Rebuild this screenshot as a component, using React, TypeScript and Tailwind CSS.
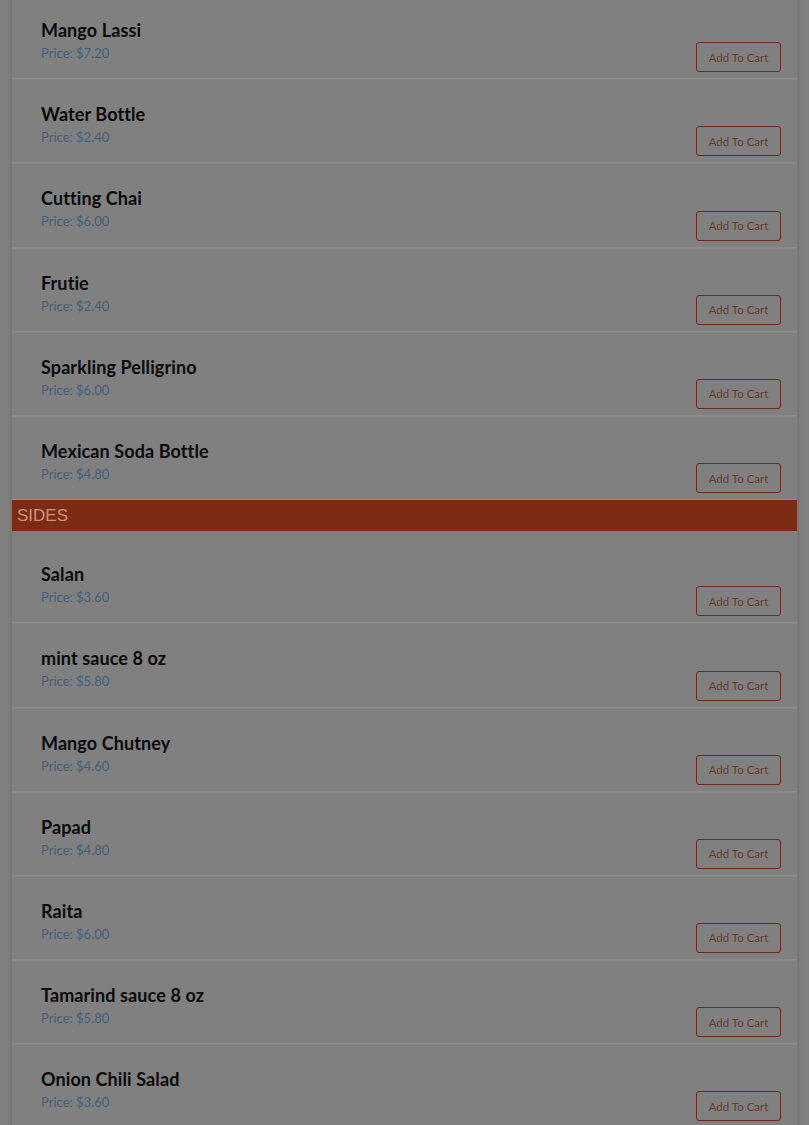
import React from 'react';

type Item = { name: string; price: string };

const DRINKS: Item[] = [
  { name: 'Mango Lassi', price: '7.20' },
  { name: 'Water Bottle', price: '2.40' },
  { name: 'Cutting Chai', price: '6.00' },
  { name: 'Frutie', price: '2.40' },
  { name: 'Sparkling Pelligrino', price: '6.00' },
  { name: 'Mexican Soda Bottle', price: '4.80' },
];

const SIDES: Item[] = [
  { name: 'Salan', price: '3.60' },
  { name: 'mint sauce 8 oz', price: '5.80' },
  { name: 'Mango Chutney', price: '4.60' },
  { name: 'Papad', price: '4.80' },
  { name: 'Raita', price: '6.00' },
  { name: 'Tamarind sauce 8 oz', price: '5.80' },
  { name: 'Onion Chili Salad', price: '3.60' },
];

function MenuRow({ item }: { item: Item }) {
  return (
    <div className="h-[84.2px] flex justify-between border-b border-[#8c8c8c] shadow-[0_1px_0_#868686] pl-[29px] pr-[16px]">
      <div className="pt-[23px]">
        <h3 className="text-[18px] leading-[24px] font-bold text-[#0a0a0a] tracking-[0.1px]">{item.name}</h3>
        <p className="mt-[1px] text-[13px] leading-[20px] text-[#465e78]">Price: ${item.price}</p>
      </div>
      <div className="flex items-end pb-[6px]">
        <button className="h-[30px] w-[85px] rounded-[3px] border border-[#6a2c22] text-[11.5px] text-[#6a3a2e] bg-transparent">
          Add To Cart
        </button>
      </div>
    </div>
  );
}

export default function App() {
  return (
    <div className="h-[1125px] overflow-hidden bg-[#808080] font-['Lato','Liberation_Sans',sans-serif]">
      <div className="mx-[10px] -mt-[5px] border-l-2 border-r-2 border-[#777777] bg-[#808080] shadow-[0_0_2px_#737373]">
        {DRINKS.map(it => <MenuRow key={it.name} item={it} />)}
        <div className="h-[31px] bg-[#7d2b12] flex items-center px-[5px]">
          <span className="font-['Liberation_Sans',Arial,sans-serif] text-[17px] text-[#c99580]">SIDES</span>
        </div>
        <div className="pt-[8px]">
          {SIDES.map(it => <MenuRow key={it.name} item={it} />)}
        </div>
      </div>
    </div>
  );
}
